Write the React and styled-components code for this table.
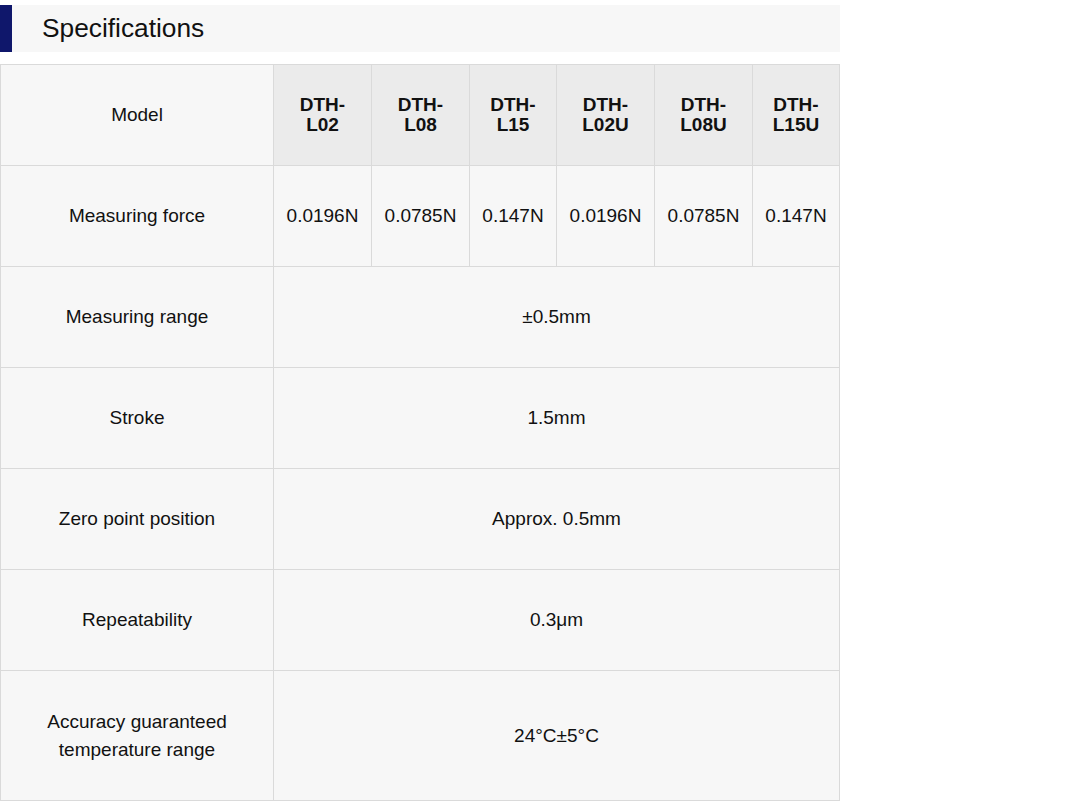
import React from 'react'
import styled, { createGlobalStyle } from 'styled-components'

const GlobalStyle = createGlobalStyle`
  body {
    margin: 0;
    background: #fff;
    font-family: 'Liberation Sans', Arial, sans-serif;
    color: #111;
  }
`

const models = ['DTH-L02', 'DTH-L08', 'DTH-L15', 'DTH-L02U', 'DTH-L08U', 'DTH-L15U']
const widths = [273, 98, 98, 87, 98, 98, 87]
const forces = ['0.0196N', '0.0785N', '0.147N', '0.0196N', '0.0785N', '0.147N']

const rows = [
  { label: 'Measuring range', value: '±0.5mm' },
  { label: 'Stroke', value: '1.5mm' },
  { label: 'Zero point position', value: 'Approx. 0.5mm' },
  { label: 'Repeatability', value: '0.3μm' },
  { label: 'Accuracy guaranteed temperature range', value: '24°C±5°C', tall: true },
]

const App = () => (
  <Page>
    <GlobalStyle />
    <TitleBar>
      <Stripe />
      <Title>Specifications</Title>
    </TitleBar>
    <SpecTable>
      <colgroup>
        {widths.map((w, i) => (
          <col key={i} style={{ width: w }} />
        ))}
      </colgroup>
      <tbody>
        <tr>
          <Cell>Model</Cell>
          {models.map(m => (
            <HeadCell key={m}>{m}</HeadCell>
          ))}
        </tr>
        <tr>
          <Cell>Measuring force</Cell>
          {forces.map((f, i) => (
            <Cell key={i}>{f}</Cell>
          ))}
        </tr>
        {rows.map(r => (
          <tr key={r.label}>
            <Cell $tall={r.tall}>
              {r.tall ? <LabelWrap>{r.label}</LabelWrap> : r.label}
            </Cell>
            <Cell colSpan={6} $tall={r.tall}>
              {r.value}
            </Cell>
          </tr>
        ))}
      </tbody>
    </SpecTable>
  </Page>
)

export default App

const Page = styled.div`
  width: 840px;
  padding-top: 5px;
`

const TitleBar = styled.div`
  display: flex;
  align-items: center;
  height: 47px;
  background: #f7f7f7;
`

const Stripe = styled.div`
  width: 12px;
  height: 100%;
  background: #0f176b;
`

const Title = styled.h2`
  margin: 0 0 0 30px;
  font-size: 26.3px;
  font-weight: normal;
  color: #111;
`

const SpecTable = styled.table`
  margin-top: 12px;
  width: 840px;
  table-layout: fixed;
  border-collapse: collapse;
  background: #f7f7f7;
`

const Cell = styled.td`
  height: ${p => (p.$tall ? '129px' : '100px')};
  padding: 0 6px;
  border: 1px solid #dadada;
  text-align: center;
  vertical-align: middle;
  font-size: 19px;
  line-height: 28px;
  color: #111;
`

const HeadCell = styled(Cell).attrs({ as: 'th' })`
  padding: 0 14px;
  background: #ebebeb;
  font-weight: bold;
  font-size: 19px;
  line-height: 20px;
`

const LabelWrap = styled.span`
  display: inline-block;
  max-width: 200px;
`
